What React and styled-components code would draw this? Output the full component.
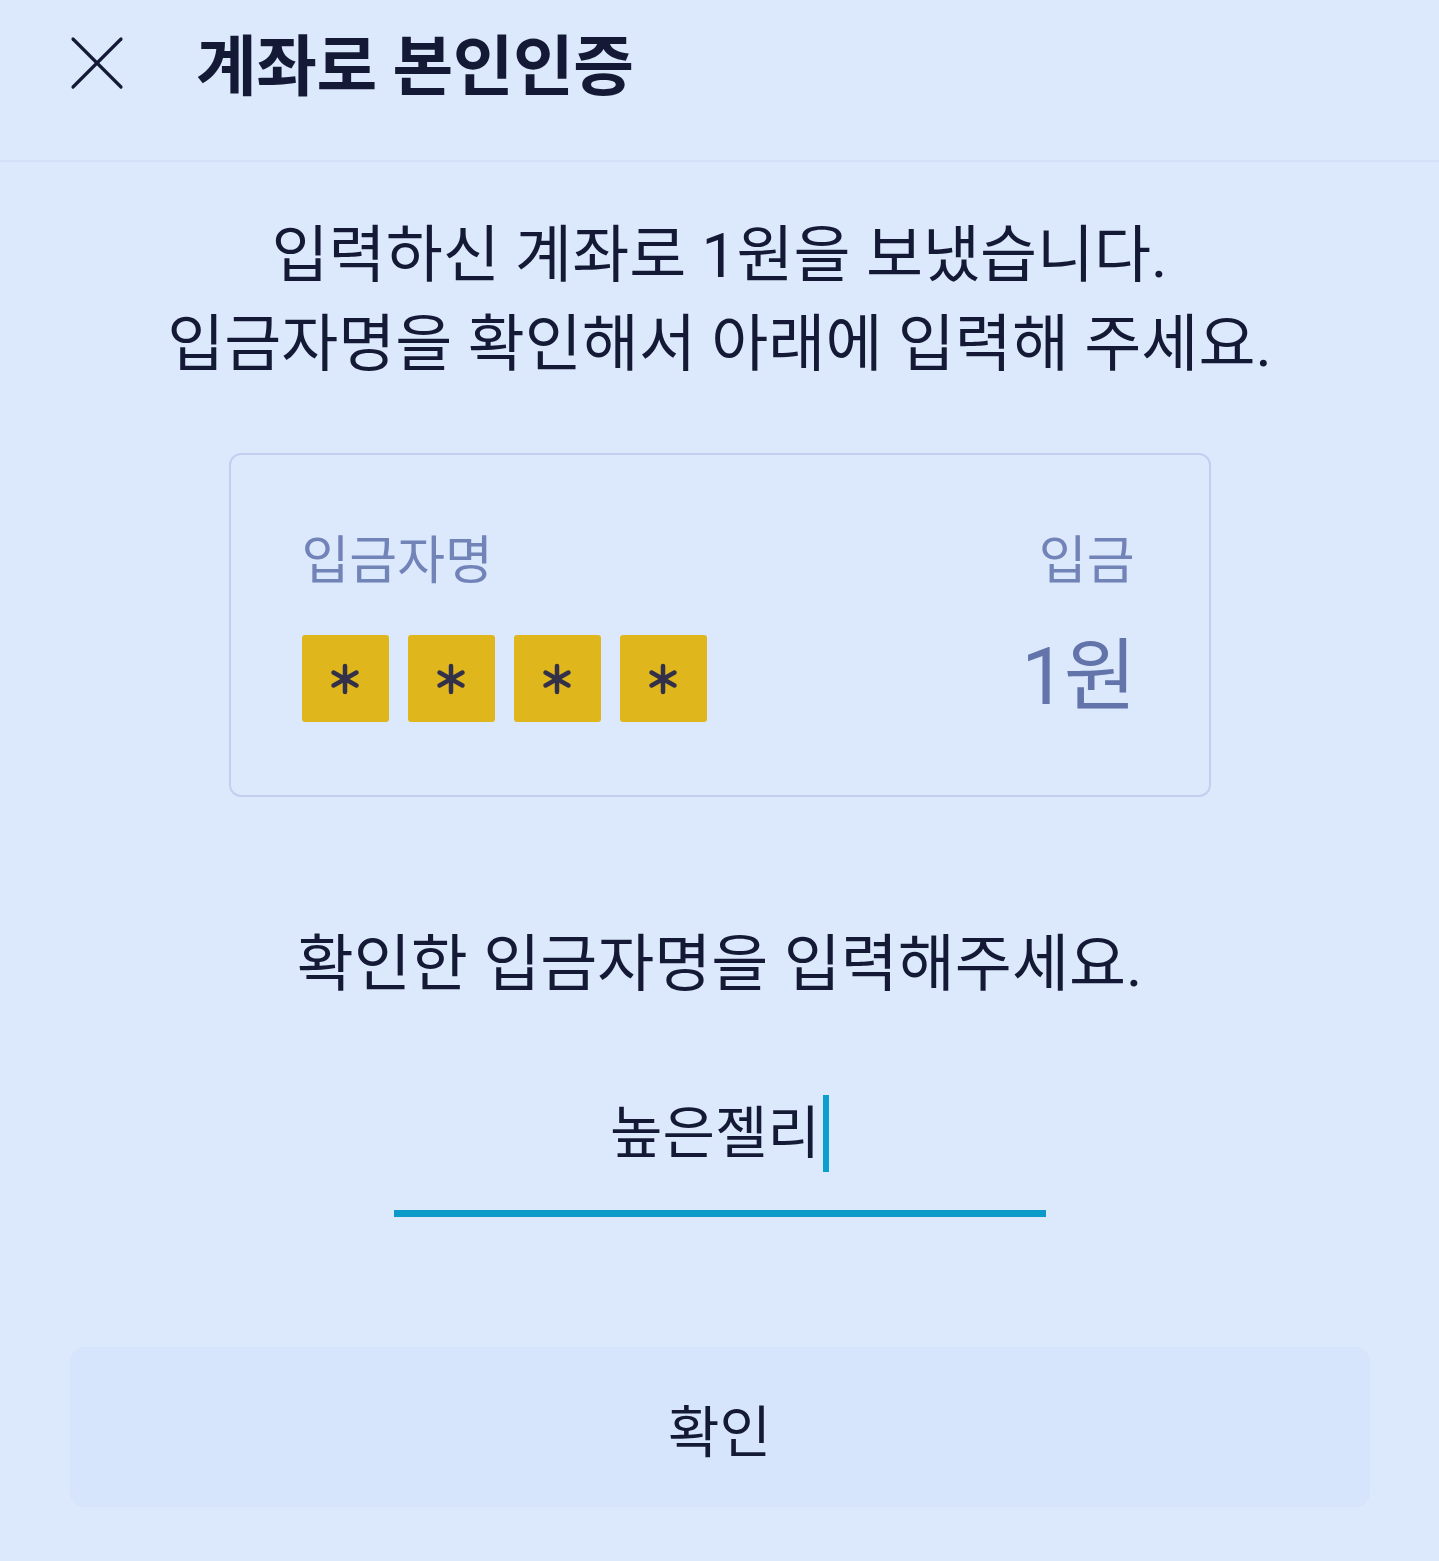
import React from "react";
import styled, { createGlobalStyle } from "styled-components";

const FONT = `Roboto, "Noto Sans CJK KR", "Noto Sans", sans-serif`;

const Global = createGlobalStyle`
  html, body { margin: 0; padding: 0; background: #dce9fc; }
  body { font-family: ${FONT}; color: #141a35; }
  * { box-sizing: border-box; }
`;

const Page = styled.div`
  width: 1439px;
  min-height: 1561px;
  background: #dce9fc;
  display: flex;
  flex-direction: column;
`;

const Header = styled.header`
  height: 162px;
  display: flex;
  align-items: center;
  padding: 0 0 38px 70px;
  border-bottom: 2px solid #d3e1f8;
  gap: 72px;
`;

const CloseButton = styled.button`
  width: 54px;
  height: 54px;
  margin-top: 4px;
  padding: 0;
  border: 0;
  background: none;
  display: flex;
  align-items: center;
  justify-content: center;
  cursor: pointer;
`;

const Title = styled.h1`
  margin: 0;
  font-size: 66px;
  font-weight: 700;
  letter-spacing: -0.5px;
  color: #141a35;
`;

const Main = styled.main`
  display: flex;
  flex-direction: column;
  align-items: center;
`;

const Description = styled.p`
  margin: 49px 0 0;
  font-size: 62px;
  line-height: 89px;
  text-align: center;
  color: #141a35;
`;

const Card = styled.section`
  margin-top: 64px;
  width: 982px;
  height: 344px;
  border: 2px solid #c2cff1;
  border-radius: 12px;
  padding: 77px 74px 0 71px;
  display: flex;
  justify-content: space-between;
`;

const Column = styled.div`
  display: flex;
  flex-direction: column;
  align-items: ${(p) => (p.$right ? "flex-end" : "flex-start")};
`;

const Label = styled.div`
  font-size: 52px;
  line-height: 60px;
  color: #7283b8;
`;

const Boxes = styled.div`
  margin-top: 43px;
  display: flex;
  gap: 19px;
`;

const MaskBox = styled.div`
  width: 87px;
  height: 87px;
  border-radius: 3px;
  background: #dfb61c;
  display: flex;
  align-items: center;
  justify-content: center;
`;

const Amount = styled.div`
  margin-top: 40px;
  font-size: 79px;
  line-height: 90px;
  color: #6274a9;
  letter-spacing: -2px;
`;

const Instruction = styled.p`
  margin: 123px 0 0;
  font-size: 62px;
  line-height: 89px;
  text-align: center;
  color: #141a35;
`;

const InputWrap = styled.div`
  margin-top: 86px;
  width: 652px;
  display: flex;
  justify-content: center;
  align-items: center;
  padding-bottom: 38px;
  border-bottom: 7px solid #0b9bc9;
`;

const InputText = styled.span`
  font-size: 57px;
  line-height: 77px;
  color: #141a35;
`;

const Caret = styled.span`
  width: 6px;
  height: 77px;
  margin-left: 3px;
  background: #0a9fcd;
`;

const ConfirmButton = styled.button`
  margin-top: 130px;
  width: 1300px;
  height: 160px;
  border: 0;
  border-radius: 14px;
  background: #d6e5fc;
  font-family: ${FONT};
  font-size: 56px;
  color: #141a35;
  cursor: pointer;
`;

const Star = () => (
  <svg width="30" height="32" viewBox="0 0 30 32" fill="none" stroke="#33304a" strokeWidth="4.5" strokeLinecap="round">
    <line x1="15" y1="3" x2="15" y2="29" />
    <line x1="3.5" y1="9.5" x2="26.5" y2="22.5" />
    <line x1="3.5" y1="22.5" x2="26.5" y2="9.5" />
  </svg>
);

export default function App() {
  return (
    <Page>
      <Global />
      <Header>
        <CloseButton aria-label="닫기">
          <svg width="54" height="54" viewBox="0 0 54 54" fill="none" stroke="#141a35" strokeWidth="3.2" strokeLinecap="round">
            <line x1="3" y1="3" x2="51" y2="51" />
            <line x1="51" y1="3" x2="3" y2="51" />
          </svg>
        </CloseButton>
        <Title>계좌로 본인인증</Title>
      </Header>
      <Main>
        <Description>
          입력하신 계좌로 1원을 보냈습니다.
          <br />
          입금자명을 확인해서 아래에 입력해 주세요.
        </Description>
        <Card>
          <Column>
            <Label>입금자명</Label>
            <Boxes>
              {[0, 1, 2, 3].map((i) => (
                <MaskBox key={i}>
                  <Star />
                </MaskBox>
              ))}
            </Boxes>
          </Column>
          <Column $right>
            <Label>입금</Label>
            <Amount>1원</Amount>
          </Column>
        </Card>
        <Instruction>확인한 입금자명을 입력해주세요.</Instruction>
        <InputWrap>
          <InputText>높은젤리</InputText>
          <Caret />
        </InputWrap>
        <ConfirmButton>확인</ConfirmButton>
      </Main>
    </Page>
  );
}
